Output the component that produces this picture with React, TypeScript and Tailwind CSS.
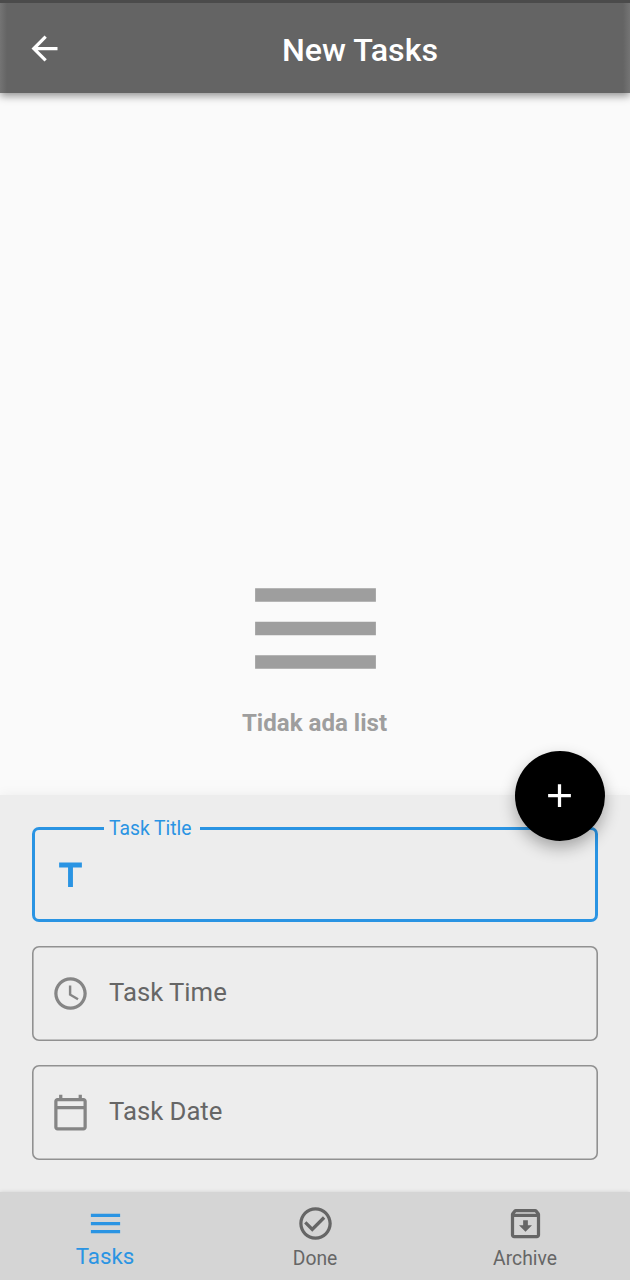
import React from 'react';

const MENU = 'M3 18h18v-2H3v2zm0-5h18v-2H3v2zm0-7v2h18V6H3z';
const BACK = 'M20 11H7.83l5.59-5.59L12 4l-8 8 8 8 1.41-1.41L7.83 13H20v-2z';
const ADD = 'M19 13h-6v6h-2v-6H5v-2h6V5h2v6h6v2z';
const TITLE = 'M5 4v3h5.5v12h3V7H19V4z';
const CLOCK =
  'M11.99 2C6.47 2 2 6.48 2 12s4.47 10 9.99 10C17.52 22 22 17.52 22 12S17.52 2 11.99 2zM12 20c-4.42 0-8-3.58-8-8s3.58-8 8-8 8 3.58 8 8-3.58 8-8 8zm.5-13H11v6l5.25 3.15.75-1.23-4.5-2.67z';
const CALENDAR =
  'M20 3h-1V1h-2v2H7V1H5v2H4c-1.1 0-2 .9-2 2v16c0 1.1.9 2 2 2h16c1.1 0 2-.9 2-2V5c0-1.1-.9-2-2-2zm0 18H4V10h16v11zm0-13H4V5h16v3z';
const CHECK =
  'M16.59 7.58L10 14.17l-3.59-3.58L5 12l5 5 8-8zM12 2C6.48 2 2 6.48 2 12s4.48 10 10 10 10-4.48 10-10S17.52 2 12 2zm0 18c-4.42 0-8-3.58-8-8s3.58-8 8-8 8 3.58 8 8-3.58 8-8 8z';
const ARCHIVE =
  'M20.54 5.23l-1.39-1.68C18.88 3.21 18.47 3 18 3H6c-.47 0-.88.21-1.16.55L3.46 5.23C3.17 5.57 3 6.02 3 6.5V19c0 1.1.9 2 2 2h14c1.1 0 2-.9 2-2V6.5c0-.48-.17-.93-.46-1.27zM6.24 5h11.52l.83 1H5.42l.82-1zM5 19V8h14v11H5zm8.45-9h-2.9v3H8l4 4 4-4h-2.55z';

function Icon({ d, className = 'size-[39px]' }: { d: string; className?: string }) {
  return (
    <svg viewBox="0 0 24 24" fill="currentColor" className={`block shrink-0 ${className}`} aria-hidden="true">
      <path d={d} />
    </svg>
  );
}

function Field({ icon, label }: { icon: string; label: string }) {
  return (
    <div className="flex h-[95px] items-center rounded-[7px] pl-[19px] text-[#858585] shadow-[inset_0_0_0_1.6px_#919191]">
      <Icon d={icon} />
      <span className="pb-[3px] pl-[19px] text-[25.7px] leading-[30px] text-[#666666]">{label}</span>
    </div>
  );
}

function Tab({ icon, label, active = false }: { icon: string; label: string; active?: boolean }) {
  return (
    <button
      className={`flex flex-1 flex-col items-center pt-[12px] ${active ? 'text-[#2a94e3]' : 'text-[#666666]'}`}
    >
      <Icon d={icon} />
      <span className={active ? 'text-[22.3px] leading-[26px]' : 'pt-[4px] text-[19.3px] leading-[24px]'}>
        {label}
      </span>
    </button>
  );
}

export default function App() {
  return (
    <div className="flex h-[1280px] w-[630px] flex-col overflow-hidden bg-[#fafafa] font-['Roboto',sans-serif]">
      <header className="relative z-10 flex h-[93px] shrink-0 items-center border-t-[3px] border-[#4b4b4b] bg-[#646464] bg-[linear-gradient(90deg,#747474_0px,#646464_7px,#646464_623px,#747474_630px)] pl-[25px] text-white shadow-[0_3px_8px_rgba(0,0,0,0.42)]">
        <Icon d={BACK} />
        <h1 className="pt-[3px] pl-[218px] text-[32.2px] leading-[38px] font-medium">New Tasks</h1>
      </header>

      <main className="flex h-[702px] shrink-0 flex-col items-center pt-[455px] text-[#9e9e9e]">
        <Icon d={MENU} className="size-[161px]" />
        <p className="pr-px text-[24.1px] leading-[28px] font-bold">Tidak ada list</p>
      </main>

      <section className="relative flex h-[397px] shrink-0 flex-col gap-6 bg-[#ededed] px-8 pt-8 shadow-[0_0_12px_rgba(0,0,0,0.06)]">
        <div className="relative flex h-[95px] items-center rounded-[7px] border-3 border-[#2a94e3] pt-px pl-[16px] text-[#2a94e3]">
          <Icon d={TITLE} />
          <span className="absolute -top-[13px] left-[69px] w-[96px] bg-[#ededed] pl-[5px] text-[19.3px] leading-[24px]">
            Task Title
          </span>
        </div>
        <Field icon={CLOCK} label="Task Time" />
        <Field icon={CALENDAR} label="Task Date" />
        <button
          aria-label="Add task"
          className="absolute -top-[44.5px] right-[25.5px] flex size-[90px] items-center justify-center rounded-full bg-black text-white shadow-[0_7px_16px_rgba(0,0,0,0.3)]"
        >
          <Icon d={ADD} />
        </button>
      </section>

      <nav className="relative flex h-[88px] shrink-0 bg-[#d5d5d5] shadow-[0_0_4px_rgba(0,0,0,0.12)]">
        <Tab icon={MENU} label="Tasks" active />
        <Tab icon={CHECK} label="Done" />
        <Tab icon={ARCHIVE} label="Archive" />
      </nav>
    </div>
  );
}
